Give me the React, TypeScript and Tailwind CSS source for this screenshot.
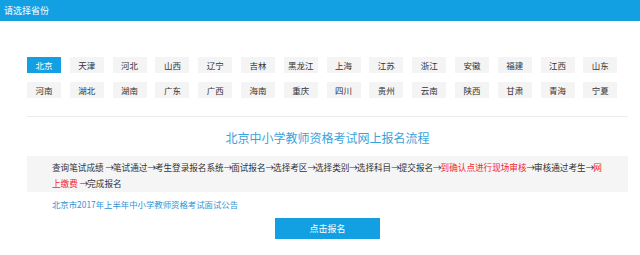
import React from "react";

const PROVINCES = [
  "北京", "天津", "河北", "山西", "辽宁", "吉林", "黑龙江", "上海", "江苏", "浙江", "安徽", "福建", "江西", "山东",
  "河南", "湖北", "湖南", "广东", "广西", "海南", "重庆", "四川", "贵州", "云南", "陕西", "甘肃", "青海", "宁夏",
];

const Arrow = () => <span className="inline-block w-[7.5px] text-center">→</span>;

const App = () => {
  const selected = "北京";

  return (
    <div
      className="w-[640px] h-[255px] bg-white overflow-hidden"
      style={{ fontFamily: '"Noto Sans CJK SC", "Noto Sans", sans-serif' }}
    >
      <div className="h-[21px] bg-[#12a0e2] text-white text-[9px] px-[4px] flex items-center">
        请选择省份
      </div>
      <div className="pl-[27px] pr-[12px] pt-[36px]">
        <div className="grid grid-cols-[repeat(14,34px)] gap-x-[8.8px] gap-y-[9px]">
          {PROVINCES.map((name) => (
            <button
              key={name}
              className={`h-[16px] text-[8.5px] leading-none flex items-center justify-center ${
                name === selected
                  ? "bg-[#12a0e2] text-white"
                  : "bg-[#f4f4f5] text-[#333]"
              }`}
            >
              {name}
            </button>
          ))}
        </div>
        <div className="mt-[18px] border-t border-[#ececec]" />
        <div className="mt-[13px] text-center text-[12px] leading-[16px] text-[#3aa2da]">
          北京中小学教师资格考试网上报名流程
        </div>
        <div className="mt-[10px] bg-[#f5f5f6] pl-[25px] pr-[4px] pt-[3px] pb-[1px] text-[8.6px] leading-[16px] text-[#333] whitespace-nowrap">
          查询笔试成绩 <Arrow />笔试通过<Arrow />考生登录报名系统<Arrow />面试报名<Arrow />选择考区<Arrow />选择类别
          <Arrow />选择科目<Arrow />提交报名<Arrow />
          <span className="text-[#f3262b]">到确认点进行现场审核</span>
          <Arrow />审核通过考生<Arrow />
          <span className="text-[#f3262b]">网</span>
          <br />
          <span className="text-[#f3262b]">上缴费</span> <Arrow />完成报名
        </div>
        <div className="mt-[6px] pl-[25px] text-[8.4px] leading-[12px] text-[#2f92d4]">
          北京市2017年上半年中小学教师资格考试面试公告
        </div>
        <div className="mt-[8px] flex justify-center">
          <button className="w-[105px] h-[21px] bg-[#12a0e2] text-white text-[9px]">
            点击报名
          </button>
        </div>
      </div>
    </div>
  );
};

export default App;
